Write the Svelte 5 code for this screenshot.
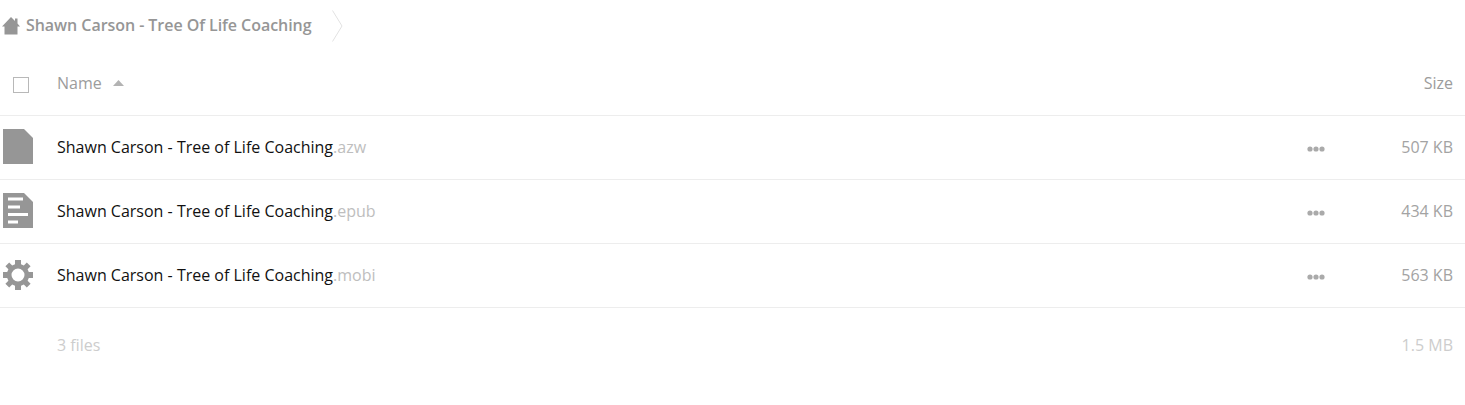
<script>
  const files = [
    { name: 'Shawn Carson - Tree of Life Coaching', ext: '.azw', size: '507 KB', icon: 'file' },
    { name: 'Shawn Carson - Tree of Life Coaching', ext: '.epub', size: '434 KB', icon: 'text' },
    { name: 'Shawn Carson - Tree of Life Coaching', ext: '.mobi', size: '563 KB', icon: 'gear' }
  ];
</script>

<div class="page">
  <nav class="crumbs">
    <svg class="home" width="18" height="18" viewBox="0 0 18 18">
      <path d="M9 0 L13 4 V1.5 H15.5 V6.5 L18 9.5 H15.5 V17.5 H2.5 V9.5 H0 Z" fill="#969696" />
    </svg>
    <span class="crumb">Shawn Carson - Tree Of Life Coaching</span>
    <svg class="chevron" width="11" height="32" viewBox="0 0 11 32">
      <path d="M0.5 0.5 L10 16 L0.5 31.5" fill="none" stroke="#e2e2e2" />
    </svg>
  </nav>

  <div class="row head">
    <div class="icon-col"><span class="checkbox"></span></div>
    <div class="name">
      Name
      <svg class="sort" width="11" height="6" viewBox="0 0 11 6"><path d="M5.5 0 L11 6 H0 Z" fill="#b3b3b3" /></svg>
    </div>
    <div class="size">Size</div>
  </div>

  {#each files as file}
    <div class="row">
      <div class="icon-col">
        {#if file.icon === 'file'}
          <svg width="30" height="35" viewBox="0 0 30 35">
            <path d="M0 0 H21 L30 9 V35 H0 Z" fill="#969696" />
          </svg>
        {:else if file.icon === 'text'}
          <svg width="30" height="35" viewBox="0 0 30 35">
            <path d="M0 0 H21 L30 9 V35 H0 Z" fill="#969696" />
            <path d="M5 4.5 H20 V7.5 H5 Z M5 12.5 H17 V15.5 H5 Z M5 20 H25 V23 H5 Z M5 27.5 H15 V30.5 H5 Z" fill="#fff" />
          </svg>
        {:else}
          <svg class="gear" width="30" height="30" viewBox="0 0 30 30">
            <path
              fill="#969696"
              fill-rule="evenodd"
              d="M12 0 H18 V4.2 L20.8 5.4 L23.8 2.4 L27.6 6.2 L24.6 9.2 L25.8 12 H30 V18 H25.8 L24.6 20.8 L27.6 23.8 L23.8 27.6 L20.8 24.6 L18 25.8 V30 H12 V25.8 L9.2 24.6 L6.2 27.6 L2.4 23.8 L5.4 20.8 L4.2 18 H0 V12 H4.2 L5.4 9.2 L2.4 6.2 L6.2 2.4 L9.2 5.4 L12 4.2 Z M15 8.5 A6.5 6.5 0 1 0 15 21.5 A6.5 6.5 0 1 0 15 8.5 Z"
            />
          </svg>
        {/if}
      </div>
      <div class="name file-name">{file.name}<span class="ext">{file.ext}</span></div>
      <svg class="more" width="18" height="6" viewBox="0 0 18 6">
        <circle cx="3" cy="3" r="2.6" fill="#aaa" />
        <circle cx="9" cy="3" r="2.6" fill="#aaa" />
        <circle cx="15" cy="3" r="2.6" fill="#aaa" />
      </svg>
      <div class="size">{file.size}</div>
    </div>
  {/each}

  <div class="summary">
    <div class="icon-col"></div>
    <div class="name">3 files</div>
    <div class="size">1.5 MB</div>
  </div>
</div>

<style>
  :global(body) {
    margin: 0;
    background: #fff;
    font-family: 'Open Sans', 'Liberation Sans', sans-serif;
    font-size: 16px;
  }

  .page {
    height: 405px;
    overflow: hidden;
  }

  .crumbs {
    display: flex;
    align-items: center;
    height: 51px;
    padding-left: 2px;
  }

  .crumb {
    margin: -2px 0 0 6px;
    font-weight: 600;
    letter-spacing: -0.05px;
    color: #969696;
  }

  .chevron {
    margin-left: 20px;
  }

  .row {
    display: flex;
    align-items: center;
    height: 63px;
    border-bottom: 1px solid #ededed;
    padding-right: 12px;
    line-height: 22px;
  }

  .row.head {
    height: 64px;
  }

  .icon-col {
    display: flex;
    align-items: center;
    width: 57px;
    flex: none;
    padding-left: 3px;
    box-sizing: border-box;
  }

  .icon-col svg {
    margin-top: -2px;
  }

  .icon-col .gear {
    margin-top: -1px;
  }

  .checkbox {
    width: 14px;
    height: 14px;
    margin: 4px 0 0 10px;
    border: 1px solid #b8b8b8;
    background: #fff;
  }

  .name {
    flex: 1;
    color: #a3a3a3;
  }

  .head .name {
    display: flex;
    align-items: center;
    gap: 11px;
  }

  .head .name,
  .head .size {
    color: #9c9c9c;
  }

  .file-name {
    margin-top: -2px;
    color: #111;
  }

  .ext {
    color: #bebebe;
  }

  .more {
    margin: 2px 76px 0 0;
  }

  .size {
    text-align: right;
    color: #a3a3a3;
  }

  .row:not(.head) .size {
    margin-top: -2px;
  }

  .summary {
    display: flex;
    align-items: center;
    height: 74px;
    padding-right: 12px;
  }

  .summary .name,
  .summary .size {
    color: #cdcdcd;
  }
</style>
